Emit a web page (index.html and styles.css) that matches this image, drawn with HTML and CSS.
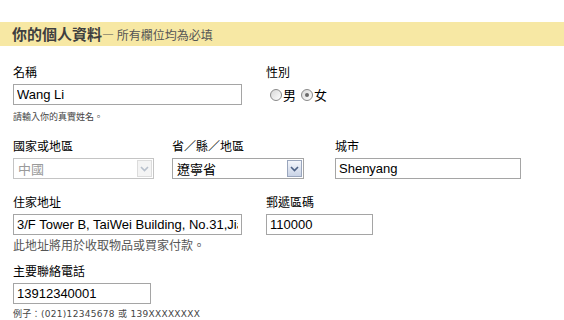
FILE: index.html
```html
<!DOCTYPE html>
<html lang="zh-Hant">
<head>
    <meta charset="UTF-8">
    <title>你的個人資料</title>
    <link rel="stylesheet" href="styles.css">
</head>
<body>
    <div class="header">
        <span class="title">你的個人資料</span><span class="subtitle">— 所有欄位均為必填</span>
    </div>
    <form class="form">
        <div class="row row-name">
            <div class="field w-name">
                <label class="label">名稱</label>
                <input class="text" type="text" value="Wang Li">
                <div class="hint small">請輸入你的真實姓名。</div>
            </div>
            <div class="field">
                <label class="label">性別</label>
                <div class="radios">
                    <label class="radio"><input type="radio" name="sex">男</label>
                    <label class="radio"><input type="radio" name="sex" checked>女</label>
                </div>
            </div>
        </div>

        <div class="row row-region">
            <div class="field w-country">
                <label class="label">國家或地區</label>
                <div class="select disabled">
                    <span class="select-value">中國</span>
                    <span class="arrow">
                        <svg width="9" height="6" viewBox="0 0 9 6"><path d="M1 1 L4.5 4.5 L8 1" fill="none" stroke="currentColor" stroke-width="1.6"/></svg>
                    </span>
                </div>
            </div>
            <div class="field w-province">
                <label class="label">省／縣／地區</label>
                <div class="select">
                    <span class="select-value">遼寧省</span>
                    <span class="arrow">
                        <svg width="9" height="6" viewBox="0 0 9 6"><path d="M1 1 L4.5 4.5 L8 1" fill="none" stroke="currentColor" stroke-width="1.6"/></svg>
                    </span>
                </div>
            </div>
            <div class="field w-city">
                <label class="label">城市</label>
                <input class="text" type="text" value="Shenyang">
            </div>
        </div>

        <div class="row row-address">
            <div class="field w-name">
                <label class="label">住家地址</label>
                <input class="text" type="text" value="3/F Tower B, TaiWei Building, No.31,Jiang Road">
                <div class="hint">此地址將用於收取物品或買家付款。</div>
            </div>
            <div class="field w-zip">
                <label class="label">郵遞區碼</label>
                <input class="text" type="text" value="110000">
            </div>
        </div>

        <div class="row row-phone">
            <div class="field w-phone">
                <label class="label">主要聯絡電話</label>
                <input class="text" type="text" value="13912340001">
                <div class="hint small">例子：(021)12345678 或 139XXXXXXXX</div>
            </div>
        </div>
    </form>
</body>
</html>
```

FILE: styles.css
```css
body {
    margin: 0;
    font-family: 'Liberation Sans', 'Noto Sans CJK TC', sans-serif;
    font-size: 12px;
    color: #000;
    background-color: #fff;
}
.header {
    margin-top: 22px;
    height: 24px;
    line-height: 24px;
    padding-left: 12px;
    background-color: #f7e8a4;
    color: #3f3f3f;
    white-space: nowrap;
}
.title {
    font-family: 'Noto Sans CJK TC', sans-serif;
    font-size: 15px;
    font-weight: bold;
}
.subtitle {
    font-family: 'Noto Sans CJK TC', sans-serif;
    font-size: 12px;
    color: #555;
}
.form {
    padding-left: 13px;
}
.row {
    display: flex;
}
.row-name {
    margin-top: 17px;
}
.row-region {
    margin-top: 14px;
}
.row-address {
    margin-top: 14px;
}
.row-phone {
    margin-top: 9px;
}
.field {
    display: flex;
    flex-direction: column;
}
.w-name {
    width: 253px;
}
.w-country {
    width: 159px;
}
.w-province {
    width: 163px;
}
.w-city {
    width: 186px;
}
.w-zip {
    width: 107px;
}
.w-phone {
    width: 138px;
}
.label {
    font-family: 'Noto Sans CJK TC', sans-serif;
    font-size: 12px;
    line-height: 18px;
    height: 18px;
    margin-bottom: 3px;
}
.text {
    box-sizing: border-box;
    height: 21px;
    margin: 0;
    padding: 0 3px;
    border: 1px solid #a5a5a5;
    font-family: 'Liberation Sans', 'Noto Sans CJK TC', sans-serif;
    font-size: 13px;
    color: #000;
    outline: none;
}
.w-name .text {
    width: 229px;
}
.w-city .text {
    width: 186px;
}
.w-zip .text {
    width: 107px;
}
.w-phone .text {
    width: 138px;
}
.hint {
    font-family: 'Noto Sans CJK TC', sans-serif;
    font-size: 12px;
    line-height: 16px;
    margin-top: 2px;
    color: #555;
}
.hint.small {
    font-size: 9px;
    line-height: 12px;
    margin-top: 6px;
    color: #444;
}
.row-phone .hint.small {
    white-space: nowrap;
    font-family: 'DejaVu Sans', 'Noto Sans CJK TC', sans-serif;
    letter-spacing: 0.3px;
    margin-top: 4px;
}
.radios {
    display: flex;
    align-items: center;
    gap: 5px;
    height: 21px;
    padding-left: 4px;
}
.radio {
    display: flex;
    align-items: center;
    gap: 1px;
    font-family: 'Noto Sans CJK TC', sans-serif;
    font-size: 13px;
}
.radio input {
    appearance: none;
    width: 12px;
    height: 12px;
    margin: 0;
    border-radius: 50%;
    border: 1px solid #8a8a8a;
    background: linear-gradient(135deg, #d8d8d8, #ffffff);
    position: relative;
}
.radio input:checked::after {
    content: "";
    position: absolute;
    left: 3px;
    top: 3px;
    width: 4px;
    height: 4px;
    border-radius: 50%;
    background-color: #6a6a6a;
}
.select {
    position: relative;
    box-sizing: border-box;
    width: 141px;
    height: 21px;
    border: 1px solid #a5a5a5;
    display: flex;
    align-items: center;
    padding-left: 4px;
    font-family: 'Noto Sans CJK TC', sans-serif;
    font-size: 13px;
}
.w-province .select {
    width: 132px;
}
.select.disabled {
    border-color: #c4c4c4;
    color: #9a9a9a;
}
.arrow {
    position: absolute;
    right: 1px;
    top: 1px;
    bottom: 1px;
    width: 15px;
    display: flex;
    align-items: center;
    justify-content: center;
    box-sizing: border-box;
    border: 1px solid #9aa6bd;
    background: linear-gradient(#f4f6fb, #c9d3e6);
    color: #4d6185;
}
.select.disabled .arrow {
    border-color: #dcdcdc;
    background: #f4f4f4;
    color: #b8c0cc;
}
```
